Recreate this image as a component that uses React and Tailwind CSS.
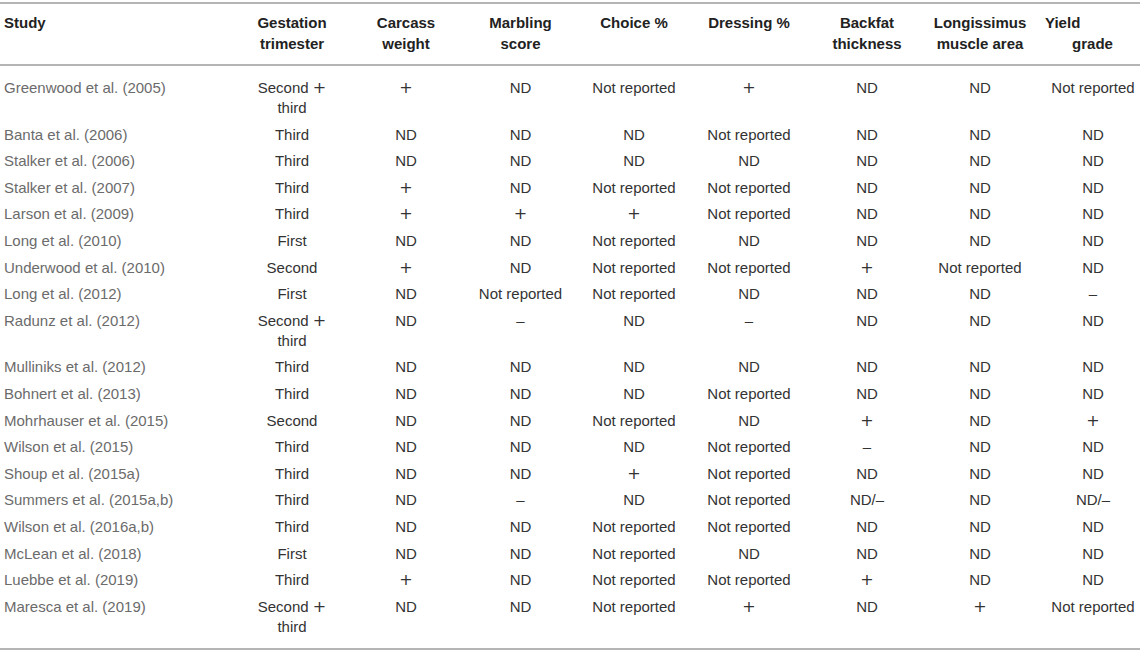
const COLUMNS = [
  { key: 'study', label: ['Study'], width: 'w-[235px]' },
  { key: 'trimester', label: ['Gestation', 'trimester'], width: 'w-[114px]' },
  { key: 'carcass', label: ['Carcass', 'weight'], width: 'w-[114px]' },
  { key: 'marbling', label: ['Marbling', 'score'], width: 'w-[115px]' },
  { key: 'choice', label: ['Choice %'], width: 'w-[112px]' },
  { key: 'dressing', label: ['Dressing %'], width: 'w-[118px]' },
  { key: 'backfat', label: ['Backfat', 'thickness'], width: 'w-[118px]' },
  { key: 'longissimus', label: ['Longissimus', 'muscle area'], width: 'w-[108px]' },
  { key: 'yield', label: ['Yield', 'grade'], width: 'w-[106px]' },
];

const NR = 'Not reported';

const ROWS = [
  ['Greenwood et al. (2005)', 'Second + third', '+', 'ND', NR, '+', 'ND', 'ND', NR],
  ['Banta et al. (2006)', 'Third', 'ND', 'ND', 'ND', NR, 'ND', 'ND', 'ND'],
  ['Stalker et al. (2006)', 'Third', 'ND', 'ND', 'ND', 'ND', 'ND', 'ND', 'ND'],
  ['Stalker et al. (2007)', 'Third', '+', 'ND', NR, NR, 'ND', 'ND', 'ND'],
  ['Larson et al. (2009)', 'Third', '+', '+', '+', NR, 'ND', 'ND', 'ND'],
  ['Long et al. (2010)', 'First', 'ND', 'ND', NR, 'ND', 'ND', 'ND', 'ND'],
  ['Underwood et al. (2010)', 'Second', '+', 'ND', NR, NR, '+', NR, 'ND'],
  ['Long et al. (2012)', 'First', 'ND', NR, NR, 'ND', 'ND', 'ND', '–'],
  ['Radunz et al. (2012)', 'Second + third', 'ND', '–', 'ND', '–', 'ND', 'ND', 'ND'],
  ['Mulliniks et al. (2012)', 'Third', 'ND', 'ND', 'ND', 'ND', 'ND', 'ND', 'ND'],
  ['Bohnert et al. (2013)', 'Third', 'ND', 'ND', 'ND', NR, 'ND', 'ND', 'ND'],
  ['Mohrhauser et al. (2015)', 'Second', 'ND', 'ND', NR, 'ND', '+', 'ND', '+'],
  ['Wilson et al. (2015)', 'Third', 'ND', 'ND', 'ND', NR, '–', 'ND', 'ND'],
  ['Shoup et al. (2015a)', 'Third', 'ND', 'ND', '+', NR, 'ND', 'ND', 'ND'],
  ['Summers et al. (2015a,b)', 'Third', 'ND', '–', 'ND', NR, 'ND/–', 'ND', 'ND/–'],
  ['Wilson et al. (2016a,b)', 'Third', 'ND', 'ND', NR, NR, 'ND', 'ND', 'ND'],
  ['McLean et al. (2018)', 'First', 'ND', 'ND', NR, 'ND', 'ND', 'ND', 'ND'],
  ['Luebbe et al. (2019)', 'Third', '+', 'ND', NR, NR, '+', 'ND', 'ND'],
  ['Maresca et al. (2019)', 'Second + third', 'ND', 'ND', NR, '+', 'ND', '+', NR],
];

// the math-style plus sign of the journal layout
function Plus() {
  return <span className="font-['DejaVu_Sans',sans-serif] text-[16px]">+</span>;
}

function Cell({ value, col, first, last }) {
  const pad = first ? 'pt-[12px] pb-[3.3px]' : last ? 'pt-[3.3px] pb-[11px]' : 'py-[3.3px]';

  if (col === 0) {
    return <td className={`${pad} pl-[4px] align-top text-left text-[#6b6b6b] whitespace-nowrap`}>{value}</td>;
  }

  let content = value;
  if (value === 'Second + third') {
    content = (
      <>
        Second <Plus />
        <br />
        third
      </>
    );
  } else if (value === '+') {
    content = <Plus />;
  }

  return (
    <td className={`${pad} ${col === 8 ? 'pl-[12px]' : ''} align-top text-center text-[#333] whitespace-nowrap`}>
      {content}
    </td>
  );
}

export default function App() {
  return (
    <div className="bg-white w-[1143px] h-[651px] overflow-hidden pt-[2px] font-['Liberation_Sans',Arial,sans-serif] text-[15px]">
      <table className="table-fixed w-[1140px] border-collapse">
        <colgroup>
          {COLUMNS.map((c) => (
            <col key={c.key} className={c.width} />
          ))}
        </colgroup>
        <thead>
          <tr className="border-t-2 border-b-2 border-[#b5b5b5]">
            {COLUMNS.map((c, i) => (
              <th
                key={c.key}
                className={`align-top pt-[7.5px] pb-[10.5px] leading-[21px] font-bold text-[#222] ${
                  i === 0 ? 'text-left pl-[4px]' : 'text-center'
                } ${i === 8 ? 'pl-[11px]' : ''}`}
              >
                {i === 8 ? (
                  <>
                    <div className="text-left">Yield</div>
                    <div className="text-center">grade</div>
                  </>
                ) : (
                  c.label.map((l) => <div key={l}>{l}</div>)
                )}
              </th>
            ))}
          </tr>
        </thead>
        <tbody className="leading-[20px] border-b-2 border-[#b5b5b5]">
          {ROWS.map((row, r) => (
            <tr key={row[0]}>
              {row.map((v, c) => (
                <Cell key={c} value={v} col={c} first={r === 0} last={r === ROWS.length - 1} />
              ))}
            </tr>
          ))}
        </tbody>
      </table>
    </div>
  );
}
